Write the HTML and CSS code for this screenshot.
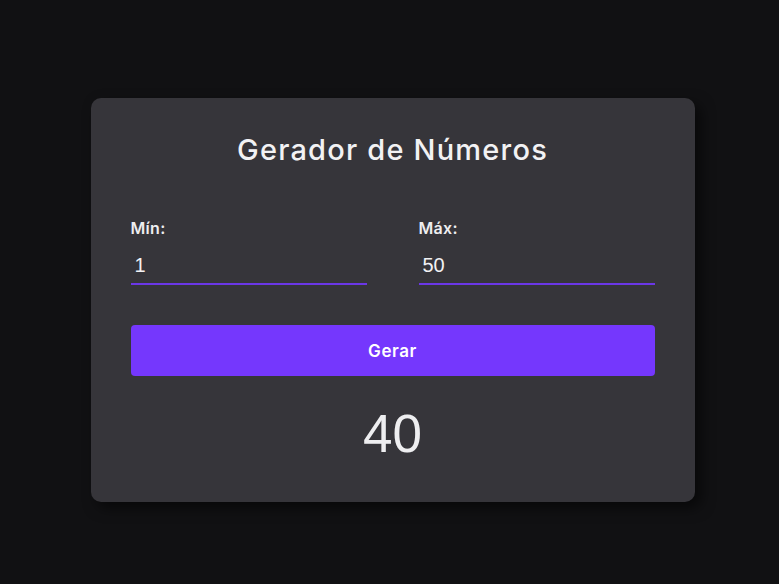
FILE: index.html
```html
<!DOCTYPE html>
<html lang="pt-BR">
<head>
<meta charset="utf-8">
<title>Gerador de Números</title>
<link rel="stylesheet" href="styles.css">
</head>
<body>
<main class="page">
  <section class="card">
    <h1 class="title">Gerador de Números</h1>
    <div class="fields">
      <div class="field">
        <label class="label" for="min">Mín:</label>
        <input class="input" id="min" type="text" value="1">
      </div>
      <div class="field">
        <label class="label" for="max">Máx:</label>
        <input class="input" id="max" type="text" value="50">
      </div>
    </div>
    <button class="button" type="button">Gerar</button>
    <div class="result">40</div>
  </section>
</main>
</body>
</html>
```
FILE: styles.css
```css
* { box-sizing: border-box; }
html, body {
  margin: 0;
  padding: 0;
  background: #111113;
  height: 100%;
}
.page {
  height: 584px;
  display: flex;
  justify-content: center;
  padding-top: 98px;
  font-family: Inter, "Noto Sans", sans-serif;
  color: #eeeef0;
}
.card {
  width: 604px;
  height: 404px;
  margin-left: 6px;
  background: #36353a;
  border-radius: 10px;
  padding: 34px 40px 0;
  box-shadow: 6px 6px 14px rgba(0, 0, 0, 0.55);
  display: flex;
  flex-direction: column;
}
.title {
  margin: 0;
  text-align: center;
  font-size: 29px;
  font-weight: 500;
  line-height: 36px;
  letter-spacing: 1.2px;
  color: #f2f2f4;
}
.fields {
  display: flex;
  justify-content: space-between;
  margin-top: 50px;
}
.field {
  width: 236px;
  display: flex;
  flex-direction: column;
}
.label {
  font-size: 16px;
  font-weight: 600;
  line-height: 20px;
  letter-spacing: 0.3px;
}
.input {
  margin-top: 10px;
  background: transparent;
  border: none;
  border-bottom: 2px solid #6b37e6;
  color: #f2f2f4;
  font-family: "Liberation Sans", Arial, sans-serif;
  font-size: 20px;
  height: 37px;
  padding: 0 4px;
  outline: none;
}
.button {
  margin-top: 40px;
  height: 51px;
  border: none;
  border-radius: 4px;
  background: #7537fd;
  color: #ffffff;
  font-family: Inter, "Noto Sans", sans-serif;
  font-size: 17px;
  font-weight: 600;
  letter-spacing: 0.6px;
}
.result {
  margin-top: 28px;
  text-align: center;
  font-family: "Liberation Sans", Arial, sans-serif;
  font-size: 53px;
  line-height: 60px;
  color: #eeeef0;
}
```
